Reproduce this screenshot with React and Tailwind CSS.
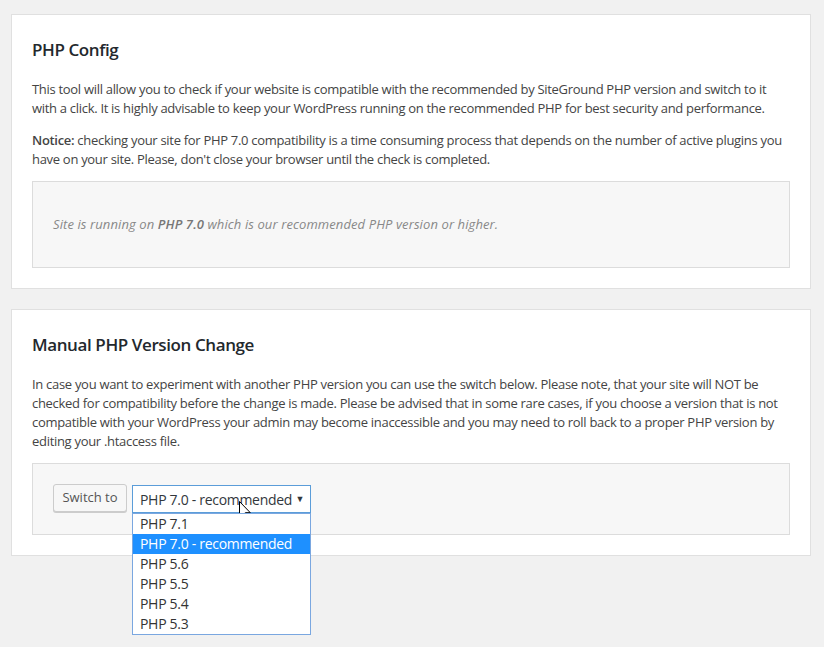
import React from 'react'

const versions = ['PHP 7.1', 'PHP 7.0 - recommended', 'PHP 5.6', 'PHP 5.5', 'PHP 5.4', 'PHP 5.3'];

function Cursor() {
    return (
        <svg className="absolute left-[107px] top-[16px] pointer-events-none" width="13" height="20" viewBox="0 0 13 20">
            <path d="M0.5 0.5 L0.5 16 L4 12.5 L6.8 18.8 L9 17.8 L6.3 11.7 L11.3 11.7 Z" fill="#fff" stroke="#000" strokeWidth="1" strokeLinejoin="round" />
        </svg>
    );
}

function App() {
    return (
        <div className="w-[824px] h-[647px] bg-[#f1f1f1] pt-[14px] pl-[11px] text-[13px] tracking-[-0.3px] text-[#444] overflow-hidden" style={{ fontFamily: '"Open Sans", "Noto Sans", sans-serif' }}>
            {/* PHP config card */}
            <div className="w-[800px] bg-white border border-[#e0e0e0] px-5 pt-[23px] pb-5">
                <h2 className="text-[17px] leading-6 font-semibold text-[#23282d] tracking-[-0.4px]">PHP Config</h2>
                <p className="mt-[18px] leading-[19px] whitespace-nowrap">
                    This tool will allow you to check if your website is compatible with the recommended by SiteGround PHP version and switch to it<br />
                    with a click. It is highly advisable to keep your WordPress running on the recommended PHP for best security and performance.
                </p>
                <p className="mt-[13px] leading-[19px] whitespace-nowrap">
                    <b className="font-semibold">Notice:</b> checking your site for PHP 7.0 compatibility is a time consuming process that depends on the number of active plugins you<br />
                    have on your site. Please, don't close your browser until the check is completed.
                </p>
                <div className="mt-3 h-[87px] bg-[#f7f7f7] border border-[#dcdcdc] flex items-center px-5">
                    <p className="italic text-[#888] tracking-[0.1px]">
                        Site is running on <b className="font-semibold text-[#777]">PHP 7.0</b> which is our recommended PHP version or higher.
                    </p>
                </div>
            </div>

            {/* manual change card */}
            <div className="mt-5 w-[800px] bg-white border border-[#e0e0e0] px-5 pt-[23px] pb-5">
                <h2 className="text-[17px] leading-6 font-semibold text-[#23282d] tracking-[-0.4px]">Manual PHP Version Change</h2>
                <p className="mt-[18px] leading-[19px] whitespace-nowrap">
                    In case you want to experiment with another PHP version you can use the switch below. Please note, that your site will NOT be<br />
                    checked for compatibility before the change is made. Please be advised that in some rare cases, if you choose a version that is not<br />
                    compatible with your WordPress your admin may become inaccessible and you may need to roll back to a proper PHP version by<br />
                    editing your .htaccess file.
                </p>
                <div className="mt-3 h-[72px] bg-[#f7f7f7] border border-[#dcdcdc] pl-5 pt-5 flex items-start gap-[5px]">
                    <button className="h-[28px] w-[74px] bg-[#f7f7f7] border border-[#ccc] rounded-[3px] shadow-[0_1px_0_#ccc] text-[#555] tracking-normal">Switch to</button>
                    <div className="relative mt-px">
                        <div className="h-[28px] w-[179px] bg-white border border-[#5b9dd9] flex items-center justify-between pl-[7px] pr-[6px] text-[#32373c] text-[14px] whitespace-nowrap">
                            <span>PHP 7.0 - recommended</span>
                            <span className="text-[9px]">▼</span>
                        </div>
                        <ul className="absolute left-0 top-[28px] w-[179px] bg-white border border-[#7aa7e0] z-10">
                            {versions.map((v) => (
                                <li key={v} className={`h-5 leading-5 pl-[7px] text-[14px] whitespace-nowrap ${v === 'PHP 7.0 - recommended' ? 'bg-[#1e90ff] text-white' : 'text-[#333]'}`}>{v}</li>
                            ))}
                        </ul>
                        <Cursor />
                    </div>
                </div>
            </div>
        </div>
    )
}

export default App
